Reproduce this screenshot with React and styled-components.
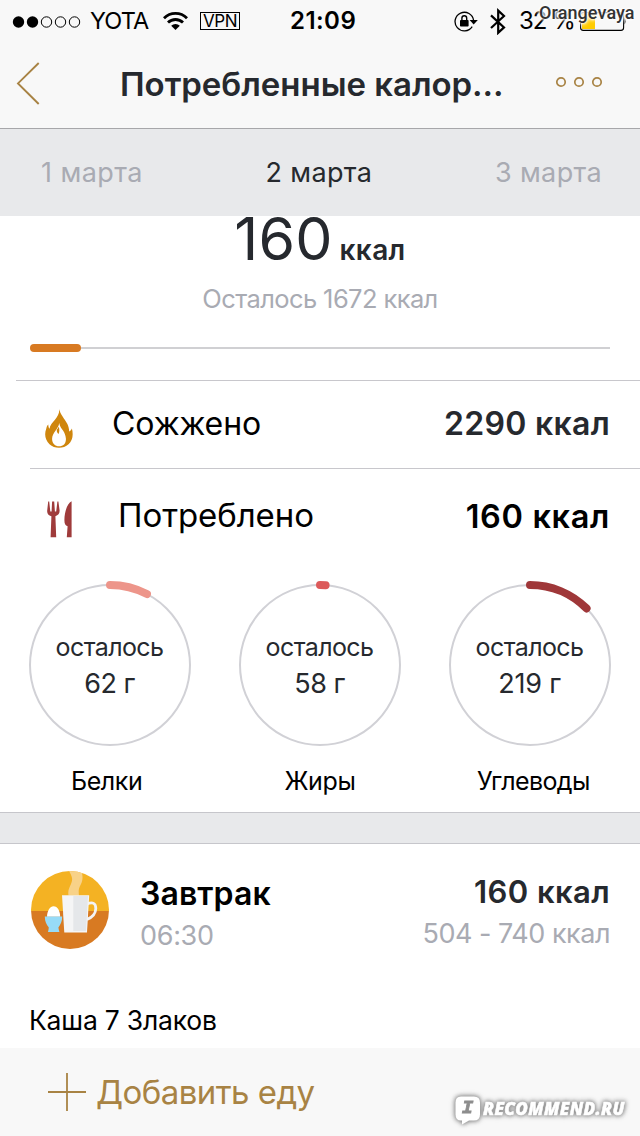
import React from "react";
import styled, { createGlobalStyle } from "styled-components";

const GlobalStyle = createGlobalStyle`
  * { box-sizing: border-box; }
  body { margin: 0; background: #fff; }
  svg { display: block; flex: none; }
`;

const Screen = styled.div`
  position: relative;
  width: 640px;
  height: 1136px;
  overflow: hidden;
  background: #fff;
  color: #000;
  font-family: Inter, "Liberation Sans", sans-serif;
  display: flex;
  flex-direction: column;
`;

const Text = styled.span`
  display: block;
  flex: none;
  white-space: nowrap;
  font-size: ${(p) => p.$size}px;
  line-height: ${(p) => p.$line || 40}px;
  font-weight: ${(p) => p.$weight || 400};
  letter-spacing: ${(p) => p.$track || 0}px;
  color: ${(p) => p.$color || "#000"};
`;

const Header = styled.header`
  height: 129px;
  background: #f8f8f8;
  border-bottom: 1px solid #a7a7aa;
`;

const StatusBar = styled.div`
  height: 40px;
  display: grid;
  grid-template-columns: 290px 164px 1fr;
  align-items: center;
`;

const StatusLeft = styled.div`
  display: flex;
  align-items: center;
  padding-left: 12px;
`;

const Carrier = styled(Text)`
  width: 73px;
  margin-left: 9px;
`;

const VpnBadge = styled.div`
  width: 40px;
  height: 18px;
  margin-left: 12px;
  border: 1px solid #000;
  display: flex;
  justify-content: center;
  align-items: center;
`;

const StatusRight = styled.div`
  display: flex;
  align-items: center;
`;

const StatusBluetooth = styled.div`
  margin-left: 12px;
`;

const Percent = styled(Text)`
  width: 61px;
  margin-left: 13px;
`;

const NavBar = styled.nav`
  height: 88px;
  display: flex;
  align-items: flex-start;
  padding: 0 37px 0 16px;
`;

const BackButton = styled.div`
  width: 104px;
  padding-top: 22px;
`;

const Title = styled(Text)`
  width: 435px;
`;

const MoreButton = styled.div`
  padding-top: 36px;
`;

const DateTabs = styled.div`
  height: 87px;
  flex: none;
  background: #e8e9eb;
  display: flex;
  justify-content: space-between;
  padding: 0 38px 0 41px;
`;

const Summary = styled.section`
  height: 164px;
  flex: none;
  display: flex;
  flex-direction: column;
  align-items: center;
`;

const Total = styled.div`
  display: flex;
  align-items: baseline;
  gap: 7px;
  height: 60px;
`;

const ProgressTrack = styled.div`
  width: 580px;
  height: 8px;
  margin-top: 22px;
  display: flex;
  align-items: center;
`;

const ProgressFill = styled.div`
  width: 51px;
  height: 8px;
  border-radius: 4px;
  background: #d87a22;
`;

const ProgressRest = styled.div`
  flex: 1;
  height: 2px;
  background: #d0d0d3;
`;

const StatRow = styled.div`
  flex: none;
  height: ${(p) => p.$height}px;
  margin-left: ${(p) => p.$inset}px;
  padding-right: 30px;
  border-top: 1px solid #c8c7cc;
  display: flex;
  align-items: flex-start;
`;

const StatIcon = styled.div`
  width: ${(p) => p.$width}px;
  padding: ${(p) => p.$top}px 0 0 ${(p) => p.$left}px;
`;

const StatName = styled(Text)`
  flex: 1;
  margin-top: ${(p) => p.$top}px;
`;

const StatValue = styled(Text)`
  margin-top: ${(p) => p.$top}px;
`;

const Rings = styled.div`
  flex: none;
  display: flex;
  justify-content: space-between;
  padding: 0 25px;
  height: 182px;
`;

const Ring = styled.div`
  width: 170px;
  height: 170px;
  display: grid;
  > * { grid-area: 1 / 1; }
`;

const RingLabel = styled.div`
  display: flex;
  flex-direction: column;
  align-items: center;
  padding: 49px 1px 0 0;
`;

const Nutrients = styled.div`
  flex: none;
  height: 50px;
  display: grid;
  grid-template-columns: repeat(3, 1fr);
  justify-items: center;
`;

const Divider = styled.div`
  flex: none;
  height: 32px;
  background: #e8e9eb;
  border-top: 1px solid #c6c6cb;
  border-bottom: 1px solid #c6c6cb;
`;

const Meal = styled.section`
  flex: none;
  height: 156px;
  padding: 26px 30px 0 30px;
  display: flex;
  align-items: flex-start;
`;

const MealInfo = styled.div`
  flex: 1;
  padding: 1px 0 0 30px;
`;

const MealEnergy = styled.div`
  display: flex;
  flex-direction: column;
  align-items: flex-end;
`;

const Food = styled.div`
  flex: none;
  height: 48px;
  padding-left: 29px;
`;

const Footer = styled.footer`
  flex: 1;
  background: #f8f8f8;
  display: flex;
  align-items: flex-start;
  padding: 0 0 0 48px;
`;

const AddIcon = styled.div`
  width: 48px;
  padding-top: 25px;
`;

const UserTag = styled.div`
  position: absolute;
  left: 539px;
  top: 2px;
  font: 500 18px/22px Roboto, sans-serif;
  letter-spacing: 0.1px;
  color: #333;
  text-shadow: 0 0 2px #fff, 0 0 3px #fff, 0 0 4px #fff, 0 0 5px #fff;
`;

const SiteTag = styled.div`
  position: absolute;
  left: 455px;
  top: 1096px;
  display: flex;
  align-items: flex-start;
  gap: 3px;
  filter: drop-shadow(0 0 2px #8c8c8c) drop-shadow(0 0 2px #a0a0a0);
`;

const SiteBubble = styled.div`
  display: grid;
  width: 25px;
  height: 29px;
  > * { grid-area: 1 / 1; }
`;

const SiteLetter = styled.span`
  font: italic 700 19px/25px "Liberation Mono", monospace;
  -webkit-text-stroke: 0.8px #8d8d8d;
  text-align: center;
  color: #8d8d8d;
`;

const SiteName = styled.span`
  font: italic 800 17px/25px "Open Sans", sans-serif;
  -webkit-text-stroke: 0.5px #fff;
  letter-spacing: 0.35px;
  color: #fff;
`;

const gold = "#a88344";
const ink = "#26292e";
const gray = "#a9abb3";

const SignalDots = () => (
  <svg width="69" height="13" viewBox="0 0 69 13">
    {[6.5, 20.5, 34.5, 48.5, 62.5].map((x, i) => (
      <circle key={x} cx={x} cy="7" r={i < 2 ? 5.7 : 5.2} fill={i < 2 ? "#000" : "none"} stroke={i < 2 ? "none" : "#000"} />
    ))}
  </svg>
);

const Wifi = () => (
  <svg width="25" height="18" viewBox="0 0 25 18">
    <g fill="none" stroke="#000" strokeWidth="2.8">
      <path d="M1 6.2 A16.2 16.2 0 0 1 24 6.2" />
      <path d="M5 10.6 A10.6 10.6 0 0 1 20 10.6" />
    </g>
    <path d="M12.5 18 L8.2 13.7 A6.1 6.1 0 0 1 16.8 13.7 Z" />
  </svg>
);

const RotationLock = () => (
  <svg width="24" height="21" viewBox="0 0 24 21">
    <path d="M18.2 15.6 A9.3 9.3 0 1 1 19.6 9.5" fill="none" stroke="#000" strokeWidth="1.3" />
    <path d="M15.6 9 H23.8 L19.7 13.4 Z" />
    <rect x="6" y="9" width="8.6" height="6.6" rx="0.8" />
    <path d="M7.9 9.5 V7.2 A2.4 2.4 0 0 1 12.7 7.2 V9.5" fill="none" stroke="#000" strokeWidth="1.4" />
  </svg>
);

const Bluetooth = () => (
  <svg width="16" height="27" viewBox="0 0 16 27">
    <path d="M1 7.4 L14 19.4 L8.2 24.8 V2.6 L14 8 L1 20" fill="none" stroke="#000" strokeWidth="2.2" />
  </svg>
);

const Battery = () => (
  <svg width="46" height="19" viewBox="0 0 46 19">
    <rect x="0.6" y="0.6" width="43" height="17.8" rx="2.6" fill="none" stroke="#000" strokeWidth="1.1" />
    <rect x="2" y="2" width="13" height="15" fill="#fc0" />
    <path d="M44.6 6 Q46.4 9 44.6 12.5 Z" />
  </svg>
);

const Chevron = () => (
  <svg width="24" height="43" viewBox="0 0 24 43">
    <path d="M22.7 1 L2 21.4 L22.7 42" fill="none" stroke={gold} strokeWidth="1.9" />
  </svg>
);

const Dots = () => (
  <svg width="48" height="12" viewBox="0 0 48 12">
    {[6, 24, 42].map((x) => (
      <circle key={x} cx={x} cy="6" r="4.2" fill="none" stroke={gold} strokeWidth="1.7" />
    ))}
  </svg>
);

const Flame = () => (
  <svg width="28" height="39" viewBox="0 0 28 39">
    <path
      fill="#cf860d"
      fillRule="evenodd"
      d="M14.3 0 C14.9 5 19.5 9.5 22.4 15 C23.5 17.5 24 19.5 24.2 22.4 C25.5 22 26.3 21 26.9 19.6 C28.6 26 27.5 31.5 23.5 35.3 C18.5 40 9.5 40 4.5 35.3 C0.3 31.2 -1 25.5 1.3 19.6 C1.5 17.8 2.2 16.4 3.3 15.4 C3.3 17.2 3.7 18.6 4.5 19.8 C5.6 12.5 14.6 9.5 14.3 0 Z M14.2 14 C13.6 20 7.3 23.5 7.1 29.8 C7 34.5 10 37.3 14.2 37.3 C18.4 37.3 21.2 34.5 20.9 29.5 C20.6 26.5 19.6 24 18 21.6 C16.6 19.5 14.6 17.5 14.2 14 Z"
    />
    <path fill="#cf860d" d="M13.6 17.6 C14.6 20 14.6 22.6 13.6 25 C12.4 24.2 11.6 22.8 11.8 20.8 C12.6 20 13.3 19 13.6 17.6 Z" />
  </svg>
);

const Cutlery = () => (
  <svg width="26" height="37" viewBox="0 0 26 37">
    <g fill="#9f3b3b">
      <path d="M1.2 0.5 L2.2 0.5 L3.3 10.4 L4.6 10.4 L5.1 0.5 H7.2 L7.9 10.4 H9.2 L10.4 0.5 H11.4 L12.6 9.5 C12.7 12.5 11.2 14.3 8.4 15.2 L9.2 36.3 H3.6 L4.4 15.2 C1.4 14.3 -0.1 12.5 0.2 9.5 Z" />
      <path d="M24.6 0.3 V36.3 H19.8 L20.6 25.2 C18.2 24.8 17.4 22.8 17.4 19 C17.5 10.5 20.3 2.5 24.6 0.3 Z" />
    </g>
  </svg>
);

const RingGraphic = ({ angle, color }) => {
  const a = (angle * Math.PI) / 180;
  return (
    <svg width="170" height="170" viewBox="0 0 170 170">
      <circle cx="85" cy="85" r="80" fill="none" stroke="#d1d1d6" strokeWidth="2" />
      <path
        d={`M85 5 A80 80 0 0 1 ${85 + 80 * Math.sin(a)} ${85 - 80 * Math.cos(a)}`}
        fill="none"
        stroke={color}
        strokeWidth="8"
        strokeLinecap="round"
      />
    </svg>
  );
};

const Breakfast = () => (
  <svg width="80" height="80" viewBox="0 0 80 80">
    <defs>
      <clipPath id="disc"><circle cx="40" cy="40" r="39" /></clipPath>
    </defs>
    <g clipPath="url(#disc)">
      <rect width="80" height="41" fill="#f4b223" />
      <rect y="41" width="80" height="39" fill="#d87a22" />
      <path d="M38.5 0 H51 C54 8 52 12 50 16 C48.5 19 48.5 22 49 25.5 H38.5 C37 18 43 14 42 8 C41.5 5 40 3 38.5 0 Z" fill="#f8d288" />
    </g>
    <path d="M57 34 Q65.8 30.5 65.8 38.5 Q65.6 46 57 49.5" fill="none" stroke="#f3f3f4" strokeWidth="2.8" />
    <path d="M32 25.3 H59.2 L57 62.4 H34.3 Z" fill="#f5f5f6" />
    <path d="M43.3 26 H58 L56 61 H43.3 Z" fill="#e5e7ea" />
    <path d="M17 46.8 C17 41 20 36.3 23.6 36.3 C27.4 36.3 30.2 41 30.2 46.8 Z" fill="#fff" />
    <path d="M14.8 46.6 H32.2 C32.2 51.5 30.5 55 28.4 57.5 C28.6 59.2 29 60.5 29.4 62 H18 C18.4 60.5 18.6 59.2 18.8 57.5 C16.5 55 14.8 51.5 14.8 46.6 Z" fill="#97dbf7" />
  </svg>
);

const Plus = () => (
  <svg width="38" height="38" viewBox="0 0 38 38">
    <path d="M19 0 V38 M0 19 H38" stroke={gold} strokeWidth="1.8" />
  </svg>
);

const Bubble = () => (
  <svg width="25" height="29" viewBox="0 0 25 29">
    <path d="M6 0.5 H19 Q25 0.5 25 6.5 V18.5 Q25 24.5 19 24.5 H14 L7 28.5 V24.5 H6 Q0.5 24.5 0.5 18.5 V6.5 Q0.5 0.5 6 0.5 Z" fill="#fff" />
  </svg>
);

const rings = [
  { value: "62 г", angle: 27.5, color: "#ed958a", track: -0.5 },
  { value: "58 г", angle: 4, color: "#dc5a5a", track: -0.5 },
  { value: "219 г", angle: 45, color: "#9f3739", track: -0.2 },
];

export default function App() {
  return (
    <Screen>
      <GlobalStyle />
      <Header>
        <StatusBar>
          <StatusLeft>
            <SignalDots />
            <Carrier $size={23.5} $line={42} $track={-0.9}>YOTA</Carrier>
            <Wifi />
            <VpnBadge>
              <Text $size={17} $line={16} $track={-0.4}>VPN</Text>
            </VpnBadge>
          </StatusLeft>
          <Text $size={24} $line={42} $weight={600} $track={0.45}>21:09</Text>
          <StatusRight>
            <RotationLock />
            <StatusBluetooth><Bluetooth /></StatusBluetooth>
            <Percent $size={24} $line={42} $track={-1}>32 %</Percent>
            <Battery />
          </StatusRight>
        </StatusBar>
        <NavBar>
          <BackButton><Chevron /></BackButton>
          <Title $size={33} $line={88} $weight={600} $track={-0.03} $color={ink}>Потребленные калор...</Title>
          <MoreButton><Dots /></MoreButton>
        </NavBar>
      </Header>

      <DateTabs>
        <Text $size={27} $line={87} $track={0.42} $color={gray}>1 марта</Text>
        <Text $size={27} $line={87} $track={0.36} $color={ink}>2 марта</Text>
        <Text $size={27} $line={87} $track={0.36} $color={gray}>3 марта</Text>
      </DateTabs>

      <Summary>
        <Total>
          <Text $size={59} $line={46} $track={0.1} $color={ink}>160</Text>
          <Text $size={28} $line={46} $weight={600} $track={0.4} $color={ink}>ккал</Text>
        </Total>
        <Text $size={25.5} $line={46} $track={-0.6} $color={gray}>Осталось 1672 ккал</Text>
        <ProgressTrack>
          <ProgressFill />
          <ProgressRest />
        </ProgressTrack>
      </Summary>

      <StatRow $height={88} $inset={16}>
        <StatIcon $width={96} $top={28} $left={29}><Flame /></StatIcon>
        <StatName $size={32} $top={23} $track={-0.09}>Сожжено</StatName>
        <StatValue $size={32} $top={23} $weight={600} $track={0.3} $color={ink}>2290 ккал</StatValue>
      </StatRow>
      <StatRow $height={112} $inset={30}>
        <StatIcon $width={88} $top={32} $left={17}><Cutlery /></StatIcon>
        <StatName $size={33} $top={26} $track={-0.08}>Потреблено</StatName>
        <StatValue $size={32.5} $top={28} $weight={600} $track={0.65}>160 ккал</StatValue>
      </StatRow>

      <Rings>
        {rings.map((r) => (
          <Ring key={r.value}>
            <RingGraphic angle={r.angle} color={r.color} />
            <RingLabel>
              <Text $size={25} $line={36} $track={-0.6} $color={ink}>осталось</Text>
              <Text $size={27} $line={38} $track={r.track} $color={ink}>{r.value}</Text>
            </RingLabel>
          </Ring>
        ))}
      </Rings>

      <Nutrients>
        <Text $size={25} $line={38} $track={-0.4}>Белки</Text>
        <Text $size={25} $line={38} $track={-0.36}>Жиры</Text>
        <Text $size={25} $line={38} $track={-0.63}>Углеводы</Text>
      </Nutrients>

      <Divider />

      <Meal>
        <Breakfast />
        <MealInfo>
          <Text $size={32} $line={45} $weight={600} $track={0.1}>Завтрак</Text>
          <Text $size={27} $line={40} $track={-0.31} $color={gray}>06:30</Text>
        </MealInfo>
        <MealEnergy>
          <Text $size={31} $line={43} $weight={600} $track={0.4} $color={ink}>160 ккал</Text>
          <Text $size={27} $line={42} $track={-0.48} $color={gray}>504 - 740 ккал</Text>
        </MealEnergy>
      </Meal>
      <Food>
        <Text $size={26.5} $line={41} $track={-0.2}>Каша 7 Злаков</Text>
      </Food>

      <Footer>
        <AddIcon><Plus /></AddIcon>
        <Text $size={33} $line={88} $track={-0.55} $color={gold}>Добавить еду</Text>
      </Footer>

      <UserTag>Orangevaya</UserTag>
      <SiteTag>
        <SiteBubble>
          <Bubble />
          <SiteLetter>I</SiteLetter>
        </SiteBubble>
        <SiteName>RECOMMEND.RU</SiteName>
      </SiteTag>
    </Screen>
  );
}
